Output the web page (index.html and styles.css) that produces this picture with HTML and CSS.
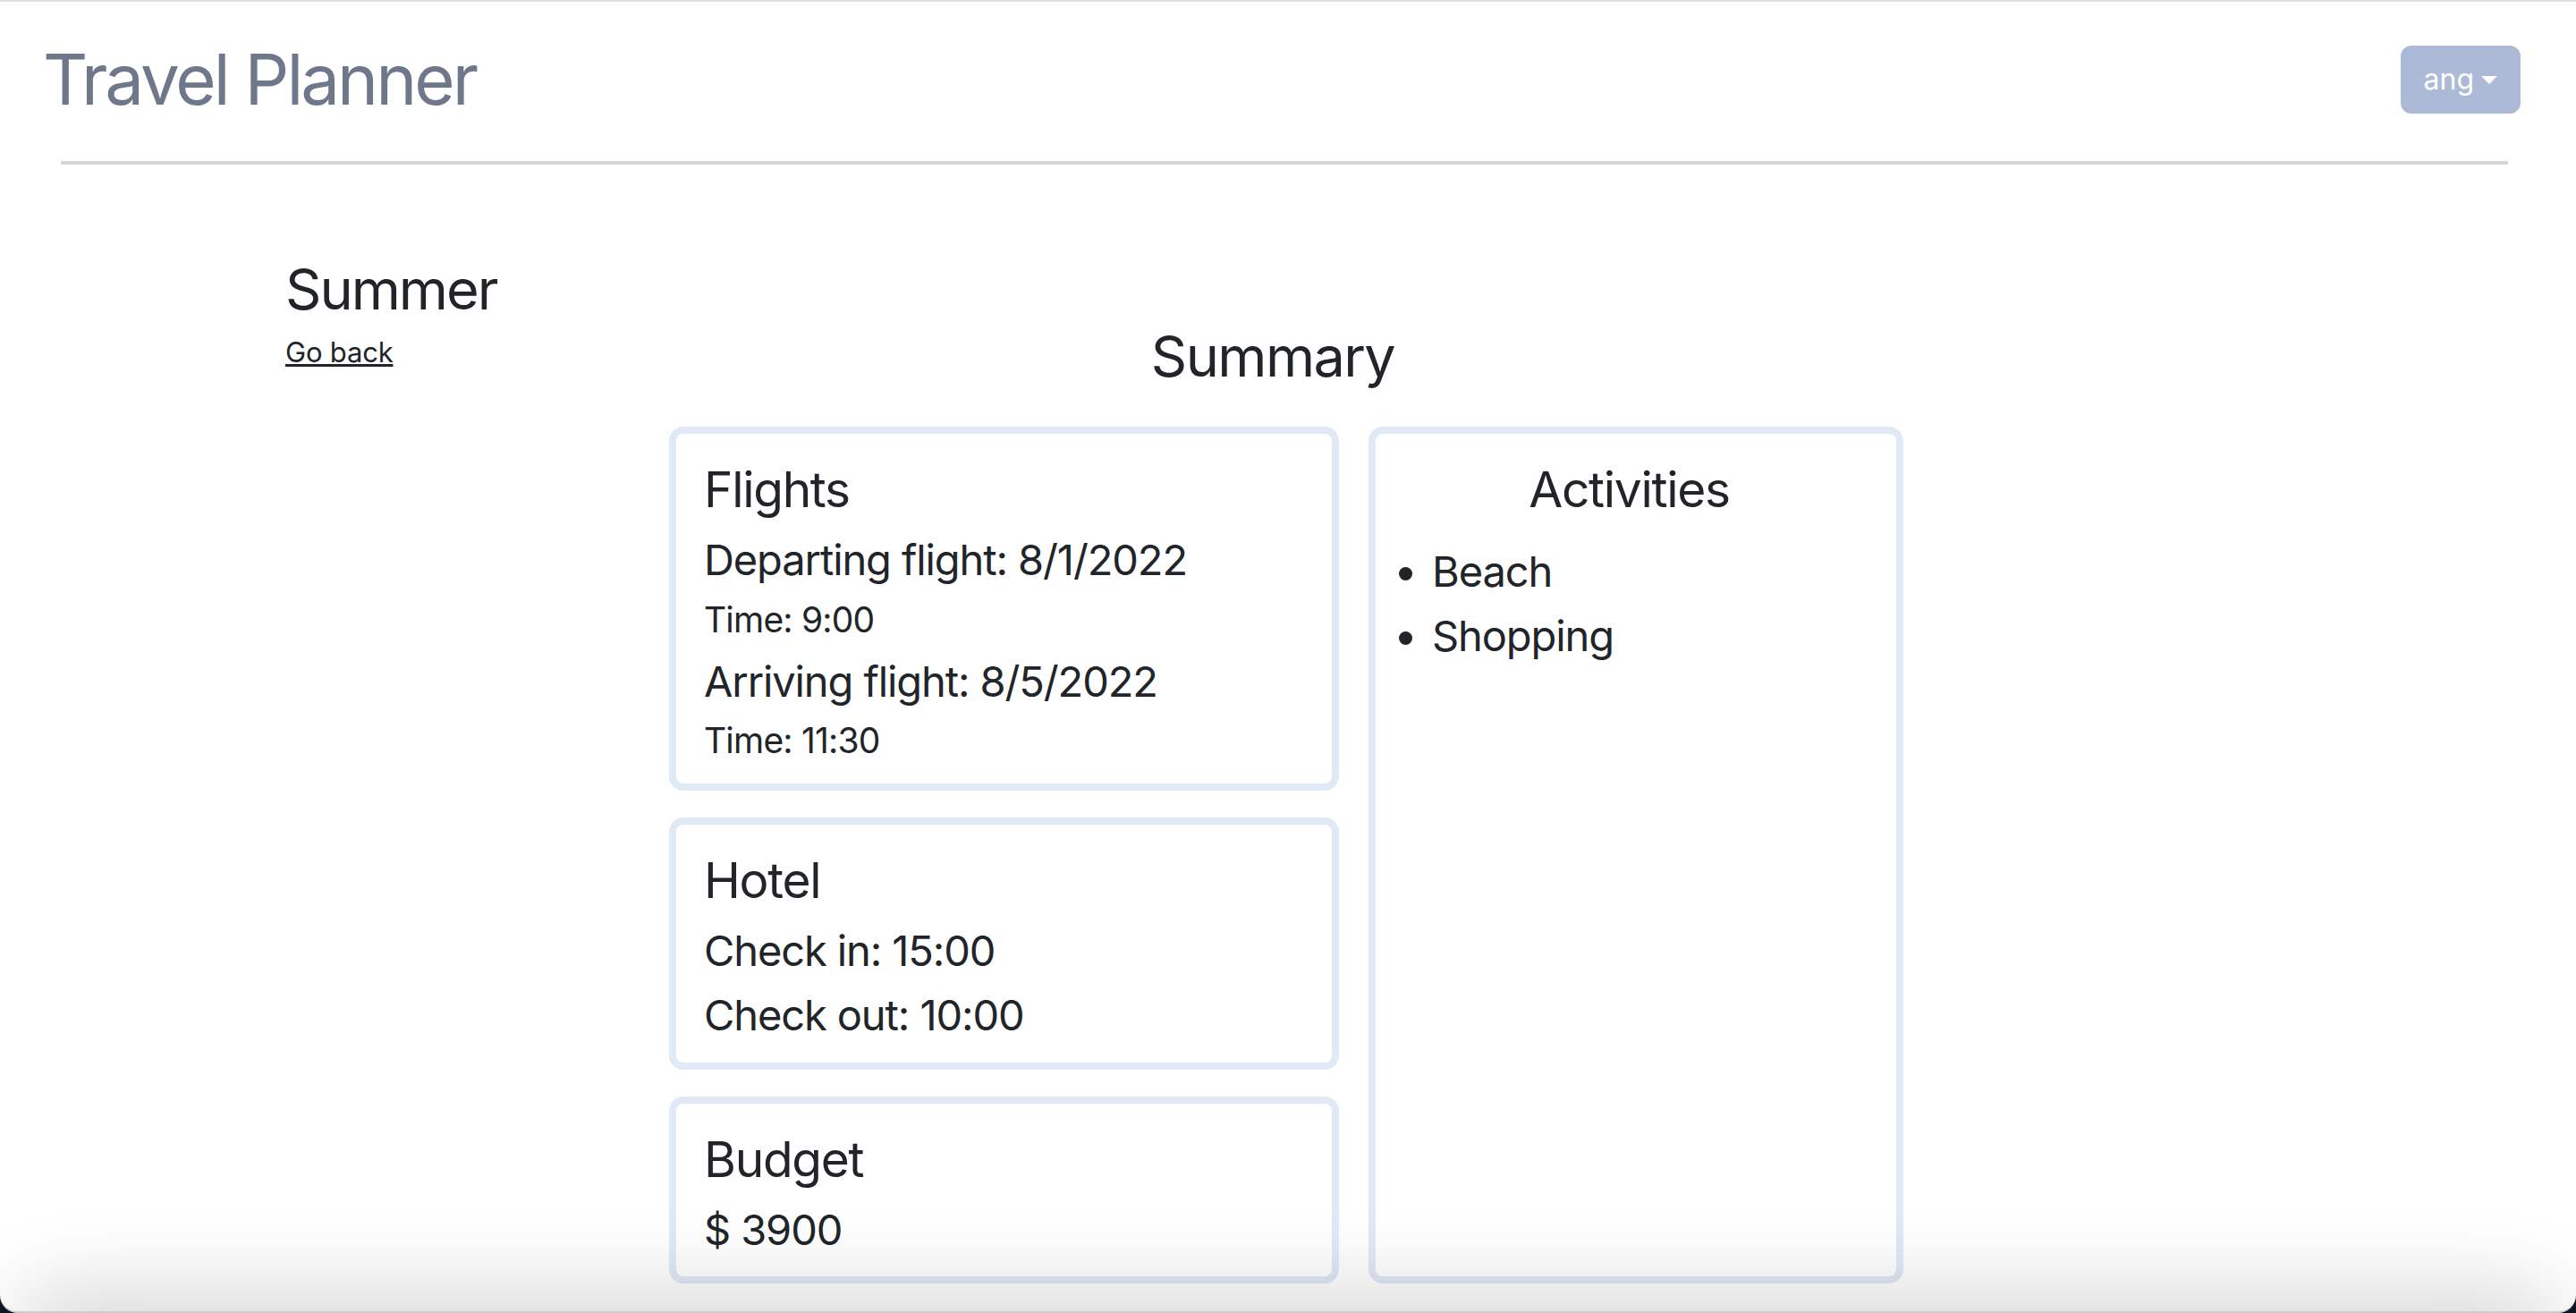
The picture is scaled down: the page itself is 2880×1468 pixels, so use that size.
FILE: index.html
```html
<!DOCTYPE html>
<html lang="en">
<head>
<meta charset="utf-8">
<title>Travel Planner</title>
<link rel="stylesheet" href="styles.css">
</head>
<body>
<div class="window">
  <header class="topbar">
    <h1 class="brand">Travel Planner</h1>
    <button class="user-btn" type="button">ang<span class="caret"></span></button>
  </header>
  <hr class="divider">
  <main class="trip">
    <div class="trip-aside">
      <h2 class="trip-name">Summer</h2>
      <a class="back-link" href="#">Go back</a>
    </div>
    <div class="summary">
      <h2 class="summary-title">Summary</h2>
      <div class="summary-grid">
        <div class="stack">
          <section class="card">
            <h3 class="card-title">Flights</h3>
            <h4 class="detail">Departing flight: 8/1/2022</h4>
            <h5 class="time">Time: 9:00</h5>
            <h4 class="detail">Arriving flight: 8/5/2022</h4>
            <h5 class="time">Time: 11:30</h5>
          </section>
          <section class="card">
            <h3 class="card-title">Hotel</h3>
            <h4 class="detail">Check in: 15:00</h4>
            <h4 class="detail">Check out: 10:00</h4>
          </section>
          <section class="card">
            <h3 class="card-title">Budget</h3>
            <h4 class="detail">$ 3900</h4>
          </section>
        </div>
        <section class="card activities">
          <h3 class="card-title centered">Activities</h3>
          <ul class="activity-list">
            <li>Beach</li>
            <li>Shopping</li>
          </ul>
        </section>
      </div>
    </div>
  </main>
  <div class="shade"></div>
</div>
</body>
</html>
```
FILE: styles.css
```css
* { box-sizing: border-box; }

html { background: #0d1726; }

body {
  margin: 0;
  font-family: Inter, "Noto Sans", sans-serif;
  color: #212529;
}

.window {
  position: relative;
  height: 100vh;
  background: #fff;
  border-top: 2px solid #dedede;
  border-bottom: 2px solid #cdcdcd;
  border-radius: 0 0 20px 20px;
  overflow: hidden;
}

.topbar {
  display: flex;
  justify-content: space-between;
  align-items: center;
  padding: 39px 62px 0 48px;
}

.brand {
  margin: 0;
  font-size: 78px;
  line-height: 96px;
  font-weight: 400;
  color: #6f788b;
  letter-spacing: -3px;
}

.user-btn {
  display: inline-flex;
  align-items: center;
  font-family: Inter, "Noto Sans", sans-serif;
  font-size: 32px;
  line-height: 48px;
  color: #fff;
  background: #adbad7;
  border: 2px solid #adbad7;
  border-radius: 12px;
  padding: 12px 24px;
}

.caret {
  display: inline-block;
  margin-left: 8px;
  width: 0;
  height: 0;
  border-top: 9px solid #fff;
  border-left: 9px solid transparent;
  border-right: 9px solid transparent;
}

.divider {
  margin: 43px 76px 0 68px;
  border: 0;
  border-top: 4px solid #d5d5d5;
}

.trip {
  display: flex;
  padding: 101px 0 0 319px;
}

.trip-aside { width: 429px; }

.trip-name {
  margin: 0 0 8px;
  font-size: 63px;
  line-height: 76.8px;
  font-weight: 400;
  letter-spacing: -2px;
}

.back-link {
  font-size: 31px;
  line-height: 48px;
  color: #212529;
  text-decoration: underline;
  letter-spacing: -0.2px;
}

.summary {
  width: 1380px;
  padding-top: 75px;
  display: flex;
  flex-direction: column;
}

.summary-title {
  margin: 0 30px 40px 0;
  text-align: center;
  font-size: 63px;
  line-height: 76.8px;
  font-weight: 400;
  letter-spacing: -1.6px;
}

.summary-grid {
  display: flex;
  gap: 33px;
  align-items: stretch;
}

.stack {
  width: 749px;
  display: flex;
  flex-direction: column;
  gap: 30px;
}

.card {
  border: 8px solid #e1e8f6;
  border-radius: 16px;
  padding: 29px 31px 24px;
  background: #fff;
}

.activities { width: 598px; }

.card-title {
  margin: 0 0 16px;
  font-size: 55px;
  line-height: 67.2px;
  font-weight: 400;
  letter-spacing: -1.3px;
}

.centered {
  text-align: center;
  margin-right: 15px;
}

.detail {
  margin: 0 0 14px;
  font-size: 47px;
  line-height: 57.6px;
  font-weight: 400;
  letter-spacing: -1.1px;
}

.time {
  margin: 0 0 16px;
  font-size: 39px;
  line-height: 48px;
  font-weight: 400;
  letter-spacing: -0.8px;
}

.card > :last-child { margin-bottom: 0; }

.activity-list {
  margin: 0;
  padding: 6px 0 0 32px;
  font-size: 47px;
  line-height: 72px;
  letter-spacing: -1.1px;
}

.shade {
  position: absolute;
  left: 40px;
  right: 40px;
  top: 100%;
  height: 60px;
  border-radius: 60px;
  box-shadow: 0 0 90px 30px rgba(0, 0, 0, 0.14);
  pointer-events: none;
}
```
